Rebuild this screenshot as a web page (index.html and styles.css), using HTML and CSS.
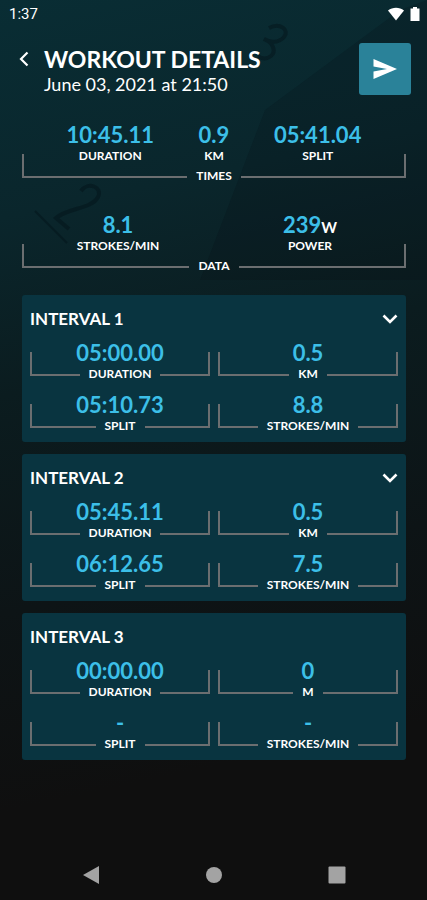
FILE: index.html
```html
<!DOCTYPE html>
<html lang="en">

<head>
  <meta charset="UTF-8">
  <meta name="viewport" content="width=device-width, initial-scale=1.0">
  <title>Workout Details</title>
  <link rel="stylesheet" href="styles.css">
</head>

<body>
  <!-- faint stopwatch dial behind the page -->
  <svg class="dial" viewBox="0 0 427 280" aria-hidden="true">
    <path d="M427 0V280H200L265 110L400 10L427 0Z" fill="#050a0c" opacity="0.15" />
    <g fill="none" stroke="#04141a" stroke-width="4" opacity="0.5">
      <path d="M269 28C280 22 290 30 284 37C279 43 270 43 264 39C274 43 276 52 271 56C267 59 262 59 258 56" />
      <path d="M81 191C88 181 103 187 98 197C92 209 67 208 56 218L69 229" />
      <path d="M35 211L67 243" stroke-width="2" />
    </g>
  </svg>

  <div class="status-bar">
    <span>1:37</span>
    <div class="status-icons">
      <svg width="18" height="14" viewBox="0 0 18 14"><path d="M1 3.500C5.500-.3 12.500-.3 17 3.500L9 13.500Z" fill="#fff" /></svg>
      <svg width="10" height="16" viewBox="0 0 10 16"><path d="M3 1H7V2.500H9.500V15H.500V2.500H3Z" fill="#fff" /></svg>
    </div>
  </div>

  <header>
    <button class="back" type="button" aria-label="Back">
      <svg width="10" height="16" viewBox="0 0 10 16"><path d="M8.500 1.500L2 8L8.500 14.500" fill="none" stroke="#fff" stroke-width="2.200" /></svg>
    </button>
    <div class="heading">
      <h1>WORKOUT DETAILS</h1>
      <p>June 03, 2021 at 21:50</p>
    </div>
    <button class="send" type="button" aria-label="Send">
      <svg width="24" height="20" viewBox="0 0 24 20"><path d="M.500 0L24 10L.500 20V12.500L14 10L.500 7.500Z" fill="#fff" /></svg>
    </button>
  </header>

  <main>
    <section class="summary">
      <dl class="stats">
        <div><dd>10:45.11</dd><dt>DURATION</dt></div>
        <div><dd>0.9</dd><dt>KM</dt></div>
        <div><dd>05:41.04</dd><dt>SPLIT</dt></div>
      </dl>
      <h2 class="bracket">TIMES</h2>
    </section>

    <section class="summary">
      <dl class="stats halves">
        <div><dd>8.1</dd><dt>STROKES/MIN</dt></div>
        <div><dd>239<small>W</small></dd><dt>POWER</dt></div>
      </dl>
      <h2 class="bracket">DATA</h2>
    </section>

    <section class="interval">
      <div class="interval-head">
        <h2>INTERVAL 1</h2>
        <button class="toggle" type="button" aria-label="Expand interval 1">
          <svg width="16" height="10" viewBox="0 0 16 10"><path d="M1.500 1.500L8 8L14.500 1.500" fill="none" stroke="#fff" stroke-width="2.600" /></svg>
        </button>
      </div>
      <dl class="cells">
        <div><dd>05:00.00</dd><dt class="bracket">DURATION</dt></div>
        <div><dd>0.5</dd><dt class="bracket">KM</dt></div>
        <div><dd>05:10.73</dd><dt class="bracket">SPLIT</dt></div>
        <div><dd>8.8</dd><dt class="bracket">STROKES/MIN</dt></div>
      </dl>
    </section>

    <section class="interval">
      <div class="interval-head">
        <h2>INTERVAL 2</h2>
        <button class="toggle" type="button" aria-label="Expand interval 2">
          <svg width="16" height="10" viewBox="0 0 16 10"><path d="M1.500 1.500L8 8L14.500 1.500" fill="none" stroke="#fff" stroke-width="2.600" /></svg>
        </button>
      </div>
      <dl class="cells">
        <div><dd>05:45.11</dd><dt class="bracket">DURATION</dt></div>
        <div><dd>0.5</dd><dt class="bracket">KM</dt></div>
        <div><dd>06:12.65</dd><dt class="bracket">SPLIT</dt></div>
        <div><dd>7.5</dd><dt class="bracket">STROKES/MIN</dt></div>
      </dl>
    </section>

    <section class="interval">
      <div class="interval-head">
        <h2>INTERVAL 3</h2>
      </div>
      <dl class="cells">
        <div><dd>00:00.00</dd><dt class="bracket">DURATION</dt></div>
        <div><dd>0</dd><dt class="bracket">M</dt></div>
        <div><dd>-</dd><dt class="bracket">SPLIT</dt></div>
        <div><dd>-</dd><dt class="bracket">STROKES/MIN</dt></div>
      </dl>
    </section>
  </main>

  <nav>
    <button type="button" aria-label="Back">
      <svg width="18" height="20" viewBox="0 0 18 20"><path d="M17 1V19L1 10Z" fill="#a3a3a3" /></svg>
    </button>
    <button type="button" aria-label="Home">
      <svg width="18" height="20" viewBox="0 0 18 20"><circle cx="9" cy="10" r="8" fill="#a3a3a3" /></svg>
    </button>
    <button type="button" aria-label="Recent apps">
      <svg width="18" height="20" viewBox="0 0 18 20"><rect x="0.500" y="1.500" width="17" height="17" rx="1" fill="#a3a3a3" /></svg>
    </button>
  </nav>
</body>

</html>
```
FILE: styles.css
```css
*,
*::before,
*::after {
  box-sizing: border-box;
}

body {
  position: relative;
  display: flex;
  flex-direction: column;
  min-height: 100vh;
  margin: 0;
  font-family: Lato, sans-serif;
  color: #fff;
  background: linear-gradient(168deg, #092d34 0%, #0a262c 22%, #0b1c1f 40%, #0d1416 62%, #0f0f0f 82%);
}

h1,
h2,
p,
dl,
dd {
  margin: 0;
}

button {
  display: flex;
  align-items: center;
  justify-content: center;
  padding: 0;
  border: none;
  background: none;
  cursor: pointer;
}

.dial {
  position: absolute;
  top: 0;
  left: 0;
  width: 100%;
  z-index: -1;
}

/* status bar */
.status-bar {
  display: flex;
  justify-content: space-between;
  align-items: center;
  height: 28px;
  padding: 0 7px 0 9px;
  font-family: Roboto, sans-serif;
  font-size: 15px;
}

.status-icons {
  display: flex;
  align-items: center;
  gap: 5px;
}

/* header */
header {
  display: flex;
  align-items: flex-start;
  padding: 15px 16px 0 14px;
}

.back {
  width: 20px;
  height: 32px;
}

.heading {
  flex: 1;
  padding-left: 10px;
}

h1 {
  font-size: 23px;
  font-weight: bold;
  line-height: 32px;
}

.heading p {
  font-size: 18px;
  line-height: 18px;
}

.send {
  width: 52px;
  height: 52px;
  border-radius: 3px;
  background: #2a8299;
}

/* stats */
main {
  flex: 1;
  padding: 28px 21px 0 22px;
}

dd {
  font-size: 22px;
  font-weight: bold;
  line-height: 24px;
  color: #3cbfe8;
}

dd small {
  font-size: 15px;
  line-height: 1;
  color: #fff;
}

dt,
.bracket {
  font-size: 12px;
  font-weight: bold;
  line-height: 18px;
}

.stats {
  display: flex;
  justify-content: space-evenly;
  text-align: center;
}

.halves div {
  flex: 1;
}

.summary {
  height: 90px;
}

.bracket {
  display: flex;
  align-items: flex-end;
  gap: 9px;
}

/* the two arms of the bracket on each side of the label */
.bracket::before,
.bracket::after {
  content: "";
  flex: 1;
  height: 24px;
  margin-bottom: 7px;
  border: 0 solid #6b6e70;
  border-bottom-width: 2px;
}

.bracket::before {
  border-left-width: 2px;
}

.bracket::after {
  border-right-width: 2px;
}

.summary .bracket {
  margin-top: -11px;
}

/* interval cards */
.interval {
  margin-bottom: 12px;
  padding: 10px 8px 7px;
  border-radius: 3px;
  background: #093440;
}

.summary + .interval {
  margin-top: -8px;
}

.interval-head {
  display: flex;
  align-items: center;
  justify-content: space-between;
  height: 28px;
}

.interval-head h2 {
  font-size: 17px;
  line-height: 28px;
}

.toggle {
  width: 16px;
  height: 28px;
}

.cells {
  display: grid;
  grid-template-columns: 1fr 1fr;
  gap: 10px 8px;
  margin-top: 8px;
  text-align: center;
}

.cells .bracket {
  margin-top: -13px;
}

/* bottom navigation */
nav {
  display: flex;
  justify-content: center;
  gap: 105px;
  padding: 15px 0;
}
```
